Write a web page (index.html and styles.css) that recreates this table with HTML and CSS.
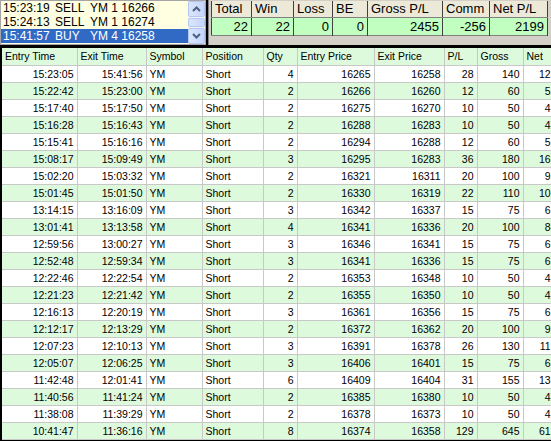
FILE: index.html
```html
<!DOCTYPE html>
<html>
<head>
<meta charset="utf-8">
<link rel="stylesheet" href="styles.css">
</head>
<body>
<div class="top">
  <div class="listbox">
    <div class="items">
      <div class="item"><span class="t">15:23:19</span><span class="s">SELL</span><span class="o">YM 1 16266</span></div>
      <div class="item"><span class="t">15:24:13</span><span class="s">SELL</span><span class="o">YM 1 16274</span></div>
      <div class="item sel"><span class="t">15:41:57</span><span class="s">BUY</span><span class="o">YM 4 16258</span></div>
    </div>
    <div class="scrollbar">
      <div class="sbtn"><svg width="9" height="6" viewBox="0 0 9 6"><path d="M1 5 L4.5 1.5 L8 5" fill="none" stroke="#4d6185" stroke-width="2"/></svg></div>
      <div class="thumb"></div>
      <div class="sbtn"><svg width="9" height="6" viewBox="0 0 9 6"><path d="M1 1 L4.5 4.5 L8 1" fill="none" stroke="#4d6185" stroke-width="2"/></svg></div>
    </div>
  </div>
  <div class="summary">
    <table class="sum">
      <colgroup><col class="c40"><col class="c42"><col class="c39"><col class="c35"><col class="c75"><col class="c47"><col class="c58"></colgroup>
      <tr class="sh"><td>Total</td><td>Win</td><td>Loss</td><td>BE</td><td>Gross P/L</td><td>Comm</td><td>Net P/L</td></tr>
      <tr class="sd"><td>22</td><td>22</td><td>0</td><td>0</td><td>2455</td><td>-256</td><td>2199</td></tr>
    </table>
  </div>
</div>
<div class="main">
  <table class="grid">
    <colgroup><col class="w1"><col class="w2"><col class="w3"><col class="w4"><col class="w5"><col class="w6"><col class="w7"><col class="w8"><col class="w9"><col class="w10"></colgroup>
    <thead>
      <tr><th>Entry Time</th><th>Exit Time</th><th>Symbol</th><th>Position</th><th>Qty</th><th>Entry Price</th><th>Exit Price</th><th>P/L</th><th>Gross</th><th>Net</th></tr>
    </thead>
    <tbody id="rows"></tbody>
  </table>
</div>
<script src="script.js"></script>
</body>
</html>
```
FILE: script.js
```js
const data = [
["15:23:05","15:41:56",4,16265,16258,28,140,124],
["15:22:42","15:23:00",2,16266,16260,12,60,52],
["15:17:40","15:17:50",2,16275,16270,10,50,42],
["15:16:28","15:16:43",2,16288,16283,10,50,42],
["15:15:41","15:16:16",2,16294,16288,12,60,52],
["15:08:17","15:09:49",3,16295,16283,36,180,168],
["15:02:20","15:03:32",2,16321,16311,20,100,92],
["15:01:45","15:01:50",2,16330,16319,22,110,102],
["13:14:15","13:16:09",3,16342,16337,15,75,63],
["13:01:41","13:13:58",4,16341,16336,20,100,84],
["12:59:56","13:00:27",3,16346,16341,15,75,63],
["12:52:48","12:59:34",3,16341,16336,15,75,63],
["12:22:46","12:22:54",2,16353,16348,10,50,42],
["12:21:23","12:21:42",2,16355,16350,10,50,42],
["12:16:13","12:20:19",3,16361,16356,15,75,63],
["12:12:17","12:13:29",2,16372,16362,20,100,92],
["12:07:23","12:10:13",3,16391,16378,26,130,118],
["12:05:07","12:06:25",3,16406,16401,15,75,63],
["11:42:48","12:01:41",6,16409,16404,31,155,131],
["11:40:56","11:41:24",2,16385,16380,10,50,42],
["11:38:08","11:39:29",2,16378,16373,10,50,42],
["10:41:47","11:36:16",8,16374,16358,129,645,613]
];
const tb = document.getElementById("rows");
data.forEach((r, i) => {
  const tr = document.createElement("tr");
  if (i % 2 === 1) tr.className = "alt";
  const cells = [
    [r[0],"r"],[r[1],"r"],["YM",""],["Short",""],[r[2],"r"],[r[3],"r"],[r[4],"r"],[r[5],"r"],[r[6],"r"],[r[7],"r"]
  ];
  cells.forEach(c => {
    const td = document.createElement("td");
    td.textContent = c[0];
    if (c[1]) td.className = c[1];
    tr.appendChild(td);
  });
  tb.appendChild(tr);
});
```
FILE: styles.css
```css
html, body {
  margin: 0;
  padding: 0;
  background: #000;
}
body {
  width: 551px;
  height: 441px;
  overflow: hidden;
  font-family: "Liberation Sans", Arial, sans-serif;
  color: #000;
}
.top {
  display: flex;
  height: 45px;
  gap: 2px;
}
.listbox {
  width: 204px;
  height: 43px;
  border: 1px solid #a5a5a5;
  background: #ffffe1;
  display: flex;
  flex: none;
}
.items {
  flex: 1;
  font-size: 12px;
}
.item {
  height: 14px;
  line-height: 14px;
  padding-left: 2px;
  display: flex;
}
.item span { flex: none; white-space: pre; }
.item .t { width: 52px; }
.item .s { width: 35px; }
.item.sel {
  background: #316ac5;
  color: #fff;
}
.scrollbar {
  width: 17px;
  display: flex;
  flex-direction: column;
  background: #f3f1ec;
}
.sbtn, .thumb {
  box-sizing: border-box;
  border: 1px solid #b4c7f2;
  border-radius: 2px;
  background: linear-gradient(90deg, #dbe6fd, #c5d5fa);
  display: flex;
  align-items: center;
  justify-content: center;
}
.sbtn { height: 17px; }
.thumb { height: 9px; margin: 1px 0; }
.summary {
  flex: 1;
  background: #d4d0c8;
  border-left: 1px solid #808080;
  padding: 1px 0 0 2px;
}
.sum {
  border-collapse: collapse;
  table-layout: fixed;
  font-size: 13px;
  border-left: 1px solid #404040;
  border-bottom: 1px solid #808080;
}
.sum td {
  height: 16px;
  padding: 0 3px;
  line-height: 16px;
  white-space: nowrap;
  overflow: hidden;
}
.sh td {
  background: #ece9d8;
  border-right: 1px solid #404040;
  border-bottom: 1px solid #808080;
}
.sd td {
  background: #c0ffc0;
  text-align: right;
  border-right: 1px solid #404040;
  height: 17px;
}
.c40 { width: 40px; }
.c42 { width: 42px; }
.c39 { width: 39px; }
.c35 { width: 35px; }
.c75 { width: 75px; }
.c47 { width: 47px; }
.c58 { width: 58px; }
.main {
  margin-top: 3px;
  margin-left: 2px;
  width: 549px;
  overflow: hidden;
  background: #fff;
}
.grid {
  border-collapse: collapse;
  table-layout: fixed;
  width: 558px;
  font-size: 10.5px;
}
.grid th, .grid td {
  border: 1px solid #c8c8c8;
  padding: 0 3px;
  white-space: nowrap;
  overflow: hidden;
  font-weight: normal;
  text-align: left;
}
.grid th {
  background: #ddfadd;
  height: 17px;
  line-height: 17px;
  border-top: none;
}
.grid td {
  height: 16px;
  line-height: 16px;
}
.grid td.r { text-align: right; }
.grid tr.alt td { background: #ddfadd; }
.grid th:first-child, .grid td:first-child { border-left: none; }
.w1 { width: 75px; }
.w2 { width: 69px; }
.w3 { width: 56px; }
.w4 { width: 61px; }
.w5 { width: 34px; }
.w6 { width: 77px; }
.w7 { width: 70px; }
.w8 { width: 33px; }
.w9 { width: 46px; }
.w10 { width: 37px; }
```
